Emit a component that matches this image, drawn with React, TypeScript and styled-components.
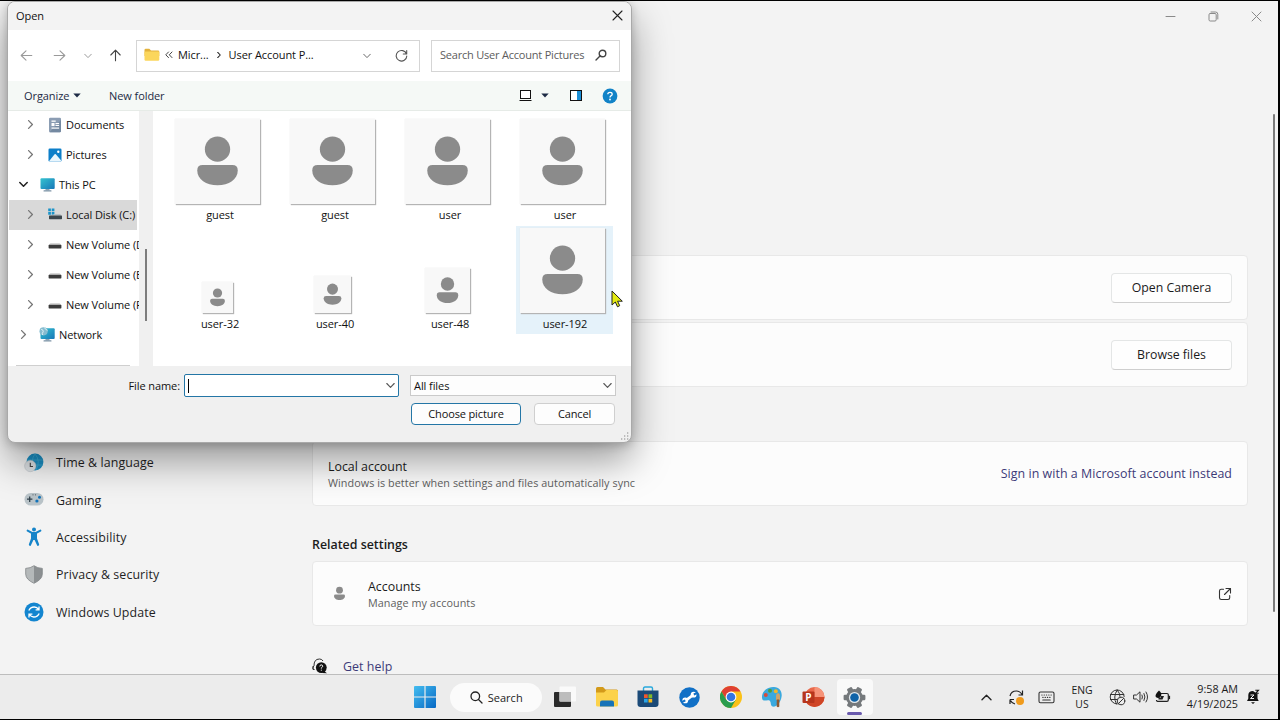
import { ReactNode } from 'react'
import styled, { createGlobalStyle, css } from 'styled-components'

const GlobalStyle = createGlobalStyle`
  * {
    box-sizing: border-box;
  }

  body {
    margin: 0;
    background: #000;
    overflow: hidden;
    font-family: 'Open Sans', 'Noto Sans', sans-serif;
    color: #1b1b1b;
    white-space: nowrap;
  }

  svg {
    display: block;
    flex: none;
  }
`

const Screen = styled.div`
  position: relative;
  width: 1280px;
  height: 720px;
  padding: 1px 2px 1px 0;
  display: flex;
  flex-direction: column;
  overflow: hidden;
  background: #000;
`

/* ---------- icons ---------- */

const Stroke = styled.svg.attrs({ fill: 'none', stroke: 'currentColor' })`
  stroke-linecap: round;
  stroke-linejoin: round;
`

const chevronPaths = {
  down: 'M0.8 2.5 L4.5 6.3 L8.2 2.5',
  right: 'M2.6 0.6 L6.4 4.5 L2.6 8.4',
  up: 'M0.8 6.4 L4.5 2.6 L8.2 6.4',
}

type ChevronProps = { dir?: keyof typeof chevronPaths; size?: number; color?: string; weight?: number }

const Chevron = ({ dir = 'down', size = 9, color = '#555', weight = 1.1 }: ChevronProps) => (
  <Stroke width={size} height={size} viewBox="0 0 9 9" color={color} strokeWidth={weight}>
    <path d={chevronPaths[dir]} />
  </Stroke>
)

const Caret = () => (
  <svg width="8" height="5" viewBox="0 0 8 5">
    <path d="M0.3 0.4 H7.7 L4 4.6 Z" fill="#1d2b45" />
  </svg>
)

const Arrow = ({ rotate = 0, color }: { rotate?: number; color: string }) => (
  <Stroke width="13" height="13" viewBox="0 0 13 13" color={color} strokeWidth="1.1">
    <path transform={`rotate(${rotate} 6.5 6.5)`} d="M1.2 6.5 H11.8 M6 1.8 L1.2 6.5 L6 11.2" />
  </Stroke>
)

const Person = ({ size }: { size: number }) => (
  <svg width={size} height={size} viewBox="0 0 86 86">
    <circle cx="43" cy="30.5" r="12.8" fill="#8b8b8b" />
    <path d="M28 46.5 H58 Q63.5 46.5 63.5 52 C63.5 61 54.5 67 43 67 C31.5 67 22.5 61 22.5 52 Q22.5 46.5 28 46.5 Z" fill="#8b8b8b" />
  </svg>
)

const FolderIcon = () => (
  <svg width="16" height="14" viewBox="0 0 16 14">
    <path d="M0.5 2 Q0.5 0.8 1.7 0.8 H5.3 L7 2.4 H14 Q15.3 2.4 15.3 3.7 V8 H0.5 Z" fill="#e3b23c" />
    <rect x="0.5" y="3.4" width="14.8" height="9.3" rx="1.2" fill="#fbd65c" />
  </svg>
)

const DocumentsIcon = () => (
  <svg width="14" height="16" viewBox="0 0 14 16">
    <rect x="1" y="0.8" width="12" height="14.4" rx="1.2" fill="#8b9db3" />
    <path d="M13 3 V14 Q13 15.2 11.8 15.2 H1.5 Z" fill="#7489a1" />
    <rect x="3.5" y="3.5" width="4.2" height="1.3" fill="#fff" />
    <rect x="3.5" y="6" width="3" height="3" fill="#fff" />
    <rect x="7.5" y="6" width="3.6" height="1.2" fill="#fff" />
    <rect x="7.5" y="8" width="3.6" height="1" fill="#fff" />
    <rect x="3.5" y="10.5" width="7.6" height="1.2" fill="#fff" />
  </svg>
)

const PicturesIcon = () => (
  <svg width="14" height="14" viewBox="0 0 14 14">
    <rect x="0.5" y="0.5" width="13" height="13" rx="1.3" fill="#0d7fc9" />
    <path d="M1 13.2 L6.6 6.2 Q7.2 5.7 7.8 6.2 L13.2 12.6 Q12.8 13.5 12 13.5 H1.8 Z" fill="#e9f6fd" />
    <circle cx="10.3" cy="3.8" r="1.2" fill="#fff" />
  </svg>
)

const MonitorIcon = ({ globe = false }: { globe?: boolean }) => (
  <svg width="17" height="15" viewBox="0 0 17 15">
    <defs>
      <linearGradient id="screen" x1="0" y1="0" x2="1" y2="1">
        <stop offset="0" stopColor="#35c3d0" />
        <stop offset="1" stopColor="#1877b8" />
      </linearGradient>
    </defs>
    <rect x="6.5" y="11.5" width="4" height="2" fill="#8aa2b4" />
    <rect x="4.5" y="13.2" width="8" height="1.2" rx="0.5" fill="#7c93a6" />
    <rect x="1.5" y="1.2" width="14.2" height="10.8" rx="1" fill="url(#screen)" />
    {globe && (
      <>
        <circle cx="4.6" cy="4.3" r="4.1" fill="#86bcd0" />
        <path d="M2.2 2.3 Q4.7 2.8 4.2 4.8 Q2.7 6.3 3.7 8 M5.5 0.6 Q6.5 2.8 8.5 3.3" stroke="#dff1f5" fill="none" />
      </>
    )}
  </svg>
)

const DiskIcon = ({ system = false }: { system?: boolean }) => (
  <svg width="16" height="14" viewBox="0 0 16 14">
    {system ? (
      <>
        <path d="M1.2 0.5 h2.7 v2.7 h-2.7 z M4.7 0.5 h2.7 v2.7 h-2.7 z M1.2 4 h2.7 v2.7 h-2.7 z M4.7 4 h2.7 v2.7 h-2.7 z" fill="#1a93c9" />
        <path d="M8 6 H13.3 L14.6 7.8 H2.4 Z" fill="#b8bfc4" />
        <rect x="2" y="7.6" width="13" height="3.6" rx="0.6" fill="#3c464d" />
      </>
    ) : (
      <>
        <path d="M3.5 5 H12.5 L14.2 7 H1.8 Z" fill="#d8d8d8" />
        <rect x="1.6" y="6.8" width="12.8" height="3.6" rx="0.6" fill="#3b3b3b" />
      </>
    )}
  </svg>
)

const ViewIcon = () => (
  <svg width="13" height="13" viewBox="0 0 13 13">
    <rect x="1.5" y="1.5" width="10" height="8" fill="#fff" stroke="#111" />
    <path d="M0.5 11.5 H12.5" stroke="#111" />
  </svg>
)

const PreviewIcon = () => (
  <svg width="14" height="12" viewBox="0 0 14 12">
    <rect x="1.5" y="0.5" width="11" height="10" fill="#fff" stroke="#111" />
    <rect x="8" y="1" width="4" height="9" fill="#1b8fd6" />
  </svg>
)

const HelpIcon = () => (
  <svg width="16" height="16" viewBox="0 0 16 16">
    <circle cx="8" cy="8" r="7.4" fill="#1183c7" />
    <path d="M5.8 6.3 Q5.8 4.4 8 4.4 Q10.2 4.4 10.2 6.2 Q10.2 7.3 8.9 7.9 Q8 8.4 8 9.5" stroke="#fff" strokeWidth="1.3" fill="none" />
    <circle cx="8" cy="11.5" r="0.9" fill="#fff" />
  </svg>
)

const TimeIcon = () => (
  <svg width="20" height="20" viewBox="0 0 20 20">
    <circle cx="11" cy="9" r="8.4" fill="#1b8fc4" />
    <path d="M3 7 H19 M4 12 H19 M11 0.8 Q6 8 10 17 M11 0.8 Q17 8 12 17" stroke="#43aed2" strokeWidth="0.7" fill="none" />
    <circle cx="6.3" cy="13" r="5.7" fill="#dde1e4" stroke="#b5bcc2" strokeWidth="0.5" />
    <path d="M6.3 9.8 V13.5 H9" stroke="#444" strokeWidth="1.1" fill="none" />
  </svg>
)

const GamingIcon = () => (
  <svg width="20" height="20" viewBox="0 0 20 20">
    <rect x="0.5" y="3" width="19" height="12.6" rx="6.3" fill="#b9c3c8" />
    <path d="M3 9.2 H8.4 M5.7 6.5 V11.9" stroke="#33424c" strokeWidth="1.3" />
    <circle cx="15.5" cy="7.2" r="1.5" fill="#1474ba" />
    <circle cx="12.9" cy="11" r="1.6" fill="#1474ba" />
    <circle cx="9" cy="4.8" r="0.6" fill="#4d5a63" />
    <circle cx="11.5" cy="4.8" r="0.6" fill="#4d5a63" />
  </svg>
)

const AccessibilityIcon = () => (
  <svg width="20" height="20" viewBox="0 0 20 20">
    <circle cx="10" cy="2.4" r="2" fill="#1584c9" />
    <path d="M3.6 3.6 L8 5.9 H12 L16.4 3.6" stroke="#1584c9" strokeWidth="2" strokeLinecap="round" fill="none" />
    <path d="M7 5.2 H13 V11.5 L15.2 17.6 Q15 19.2 13.3 18.8 L10.6 13 H9.4 L6.7 18.8 Q5 19.2 4.8 17.6 L7 11.5 Z" fill="#1584c9" />
  </svg>
)

const ShieldIcon = () => (
  <svg width="20" height="20" viewBox="0 0 20 20">
    <path d="M10 0.7 Q13.5 3.2 18.3 3.4 V9 Q18.3 14.5 10 18.3 Z" fill="#8b8f91" />
    <path d="M10 0.7 Q6.5 3.2 1.7 3.4 V9 Q1.7 14.5 10 18.3 Z" fill="#b4b8b9" />
    <path d="M10 0.7 Q13.5 3.2 18.3 3.4 V9 Q18.3 14.5 10 18.3 Q1.7 14.5 1.7 9 V3.4 Q6.5 3.2 10 0.7 Z" fill="none" stroke="#808486" strokeWidth="0.8" />
  </svg>
)

const UpdateIcon = () => (
  <svg width="20" height="20" viewBox="0 0 20 20">
    <circle cx="10" cy="10" r="9.5" fill="#1385cf" />
    <path d="M4.8 8.5 Q6.5 4.9 10.3 5 Q13 5.1 14.6 7.3 M15 4.5 V7.8 H11.6 M15.2 11.5 Q13.5 15.1 9.7 15 Q7 14.9 5.4 12.7 M5 15.5 V12.2 H8.4" stroke="#fff" strokeWidth="1.3" fill="none" />
  </svg>
)

const SupportIcon = () => (
  <svg width="16" height="16" viewBox="0 0 16 16">
    <path d="M1 11 Q0.6 8.5 2 8 Q1.8 1 7.5 1 Q10 1 11 3" stroke="#333" strokeWidth="1" fill="none" />
    <path d="M1 8 V11.5 H2.6" stroke="#333" fill="none" />
    <circle cx="9.3" cy="9.6" r="5.4" fill="#111" />
    <path d="M12 13 L15 15.3 L10 15 Z" fill="#111" />
    <path d="M7.8 8.4 Q7.9 6.9 9.3 6.9 Q10.8 7 10.7 8.3 Q10.5 9.2 9.3 9.9 V10.5 M9.3 11.7 V12.7" stroke="#fff" strokeWidth="1" fill="none" />
  </svg>
)

const OpenExternalIcon = () => (
  <Stroke width="14" height="14" viewBox="0 0 14 14" color="#333" strokeWidth="1.1">
    <path d="M5.5 2.3 H3.2 Q1.5 2.3 1.5 4 V10.8 Q1.5 12.5 3.2 12.5 H10 Q11.7 12.5 11.7 10.8 V8.5 M8 1.5 H12.5 V6 M12.5 1.5 L6.5 7.5" />
  </Stroke>
)

const StartIcon = () => (
  <svg width="22" height="22" viewBox="0 0 22 22">
    <defs>
      <linearGradient id="win" x1="0" y1="0" x2="1" y2="1">
        <stop offset="0" stopColor="#44bdf0" />
        <stop offset="1" stopColor="#0668c4" />
      </linearGradient>
    </defs>
    <path d="M0 1 Q0 0 1 0 H10.4 V10.4 H0 Z M11.6 0 H21 Q22 0 22 1 V10.4 H11.6 Z M0 11.6 H10.4 V22 H1 Q0 22 0 21 Z M11.6 11.6 H22 V21 Q22 22 21 22 H11.6 Z" fill="url(#win)" />
  </svg>
)

const TaskViewIcon = () => (
  <svg width="22" height="22" viewBox="0 0 22 22">
    <rect x="0" y="6" width="17" height="15" rx="1" fill="#2a2a2a" />
    <rect x="5.5" y="0.5" width="16.5" height="15" rx="1" fill="#fafafa" />
    <rect x="5.5" y="6" width="11.5" height="9.5" fill="#bdbdbd" />
  </svg>
)

const ExplorerIcon = () => (
  <svg width="24" height="22" viewBox="0 0 24 22">
    <path d="M1 2.5 Q1 1 2.5 1 H8 L10.5 3.5 H21.5 Q23 3.5 23 5 V9 H1 Z" fill="#d39a1a" />
    <path d="M1 6.5 H9 L11.5 4 H21.5 Q23 4 23 5.5 V19 Q23 20.5 21.5 20.5 H2.5 Q1 20.5 1 19 Z" fill="#fcd24b" />
    <path d="M5 20.5 V16.5 Q5 14.5 7 14.5 H17 Q19 14.5 19 16.5 V20.5 Z" fill="#1673b8" />
  </svg>
)

const StoreIcon = () => (
  <svg width="22" height="22" viewBox="0 0 22 22">
    <path d="M6.5 5 V2.5 Q6.5 1 8 1 H14 Q15.5 1 15.5 2.5 V5" stroke="#28a8dc" strokeWidth="1.4" fill="none" />
    <path d="M0.5 4.5 H21.5 V18 Q21.5 21 18.5 21 H3.5 Q0.5 21 0.5 18 Z" fill="#1b4a78" />
    <rect x="7" y="8.3" width="3.7" height="3.7" fill="#f0572b" />
    <rect x="11.5" y="8.3" width="3.7" height="3.7" fill="#7fba2a" />
    <rect x="7" y="12.8" width="3.7" height="3.7" fill="#2aa4e6" />
    <rect x="11.5" y="12.8" width="3.7" height="3.7" fill="#fbbb1a" />
  </svg>
)

const WrenchIcon = () => (
  <svg width="21" height="21" viewBox="0 0 21 21">
    <circle cx="10.5" cy="10.5" r="10.2" fill="#1170c6" />
    <path d="M7 13.3 L14 8" stroke="#fff" strokeWidth="2.8" />
    <circle cx="6.2" cy="13.4" r="2.9" fill="#fff" />
    <circle cx="14.6" cy="7.7" r="2.9" fill="#fff" />
    <path d="M3 15 L6.3 13.3 M18 6 L14.8 7.5" stroke="#1170c6" strokeWidth="2" />
  </svg>
)

const ChromeIcon = () => (
  <svg width="22" height="22" viewBox="0 0 22 22">
    <circle cx="11" cy="11" r="11" fill="#fbc117" />
    <path d="M11 5.5 H20.53 A11 11 0 0 0 1.47 5.5 L6.24 13.75 Z" fill="#df4033" />
    <path d="M1.47 5.5 A11 11 0 0 0 11 22 L15.76 13.75 L11 16.5 L6.24 13.75 Z" fill="#2a9d4e" />
    <circle cx="11" cy="11" r="5.4" fill="#fff" />
    <circle cx="11" cy="11" r="4.3" fill="#3475e0" />
  </svg>
)

const PaintIcon = () => (
  <svg width="22" height="22" viewBox="0 0 22 22">
    <path d="M1 12 C0.5 5 7 0.5 13 1 C19 1.5 21.5 6 20.5 11 C19.5 17 15 21.5 11.5 20.5 C9 19.5 10.5 16 8.5 14.5 C6 13 2 17 1 12 Z" fill="#3aa9de" />
    <circle cx="4.8" cy="9" r="2" fill="#d54c3c" />
    <circle cx="9" cy="4.8" r="2" fill="#4f9d3d" />
    <circle cx="14.8" cy="5.2" r="2" fill="#f0b62a" />
    <path d="M15 9.5 Q15 7.5 17 7 Q19 7.5 19 9.5 V14 H15 Z" fill="#cfa36a" />
    <path d="M15.7 13.5 H18.3 V20.5 Q17 22 15.7 20.5 Z" fill="#8e5a32" />
  </svg>
)

const PptLetter = styled.text`
  font: 700 10px 'Open Sans', sans-serif;
  fill: #fff;
`

const PowerPointIcon = () => (
  <svg width="23" height="22" viewBox="0 0 23 22">
    <circle cx="12.5" cy="11" r="10" fill="#e9684a" />
    <path d="M12.5 1 A10 10 0 0 1 22.5 11 H12.5 Z" fill="#f69378" />
    <path d="M2.5 11 A10 10 0 0 0 22.5 11 Z" fill="#cf4526" />
    <rect x="0.5" y="5.5" width="12" height="11.5" rx="1" fill="#b7351c" />
    <PptLetter x="3.3" y="14.8">P</PptLetter>
  </svg>
)

const GearIcon = () => (
  <svg width="23" height="23" viewBox="0 0 23 23">
    <g fill="#75797c">
      {[30, 90, 150].map(a => (
        <rect key={a} x="8.7" y="0.6" width="5.6" height="21.8" rx="1.2" transform={`rotate(${a} 11.5 11.5)`} />
      ))}
      <circle cx="11.5" cy="11.5" r="8.4" />
    </g>
    <circle cx="11.5" cy="11.5" r="5.6" fill="#e4eaee" />
    <circle cx="11.5" cy="11.5" r="4.3" fill="#0f63a8" />
  </svg>
)

const SyncIcon = () => (
  <svg width="17" height="17" viewBox="0 0 17 17">
    <path d="M2 7 Q3.2 2 8.3 2 Q12 2 14 5.5 M14.5 1.5 V6 H10.5 M2 10.5 H6 M2 10.5 V15 M2.5 11.5 Q4 14.5 7 15" stroke="#222" strokeWidth="1.2" fill="none" />
    <circle cx="12" cy="12" r="4" fill="#f09b1c" />
  </svg>
)

const KeyboardIcon = () => (
  <Stroke width="17" height="13" viewBox="0 0 17 13" color="#333" strokeWidth="1.1">
    <rect x="1" y="1" width="15" height="10.8" rx="1.5" />
    <path d="M3.8 4 h.3 M6.1 4 h.3 M8.4 4 h.3 M10.7 4 h.3 M13 4 h.3 M4.8 6.4 h.3 M7.1 6.4 h.3 M9.4 6.4 h.3 M11.7 6.4 h.3 M4.8 9 H12.2" />
  </Stroke>
)

const NoNetworkIcon = () => (
  <Stroke width="17" height="17" viewBox="0 0 17 17" color="#333" strokeWidth="1">
    <path d="M8 15 A7 7 0 1 1 15.2 7.5 M1.5 5.5 H14.8 M1.5 10.5 H8 M8.2 1 Q3.5 8 7.5 15 M8.2 1 Q11 4 11 7.5" />
    <circle cx="12" cy="12" r="3.8" />
    <path d="M9.5 14.5 L14.5 9.5" />
  </Stroke>
)

const VolumeIcon = () => (
  <Stroke width="16" height="14" viewBox="0 0 16 14" color="#333" strokeWidth="1">
    <path d="M1 5 H3.5 L7 1.8 V12.2 L3.5 9 H1 Z M9 5 Q10 7 9 9 M11 3.5 Q13 7 11 10.5 M13 2 Q16.2 7 13 12" />
  </Stroke>
)

const BatteryIcon = () => (
  <svg width="17" height="14" viewBox="0 0 17 14">
    <path d="M5 3.5 H13 Q14.3 3.5 14.3 4.8 V10 Q14.3 11.3 13 11.3 H3.5 Q2.5 11.3 2.5 10" stroke="#222" strokeWidth="1.2" fill="none" />
    <rect x="14.6" y="5.8" width="1.5" height="3.3" fill="#222" />
    <path d="M7 6 H10 L8.5 9.5 H4.5 V7.5 H7 Z" fill="#222" />
    <path d="M5 0.5 Q8.5 3.5 6.8 6.5 Q4.5 9.3 1.8 7 Q0.5 4.5 5 0.5 Z" fill="#111" />
  </svg>
)

const BellIcon = () => (
  <svg width="14" height="16" viewBox="0 0 14 16">
    <path d="M1 12 L2.3 9.5 V6 Q2.5 2 7 2 L11.5 5 V9.5 L12.7 12 Z" fill="#111" />
    <path d="M5 13.3 H9 L7 15 Z" fill="#111" />
    <path d="M4.5 6 H8 L4.5 9.5 H8" stroke="#eee" fill="none" />
    <path d="M9.3 1.2 H12.5 L9.7 4.3 H12.8" stroke="#111" strokeWidth="1.1" fill="none" />
  </svg>
)

/* ---------- settings window ---------- */

const SettingsWindow = styled.div`
  height: 673px;
  display: flex;
  background: #f3f3f3;
  overflow: hidden;
`

const Sidebar = styled.nav`
  width: 312px;
  padding: 443px 0 0 24px;
`

const SidebarItem = styled.div`
  height: 37.4px;
  display: flex;
  align-items: center;
  gap: 12px;
  font-size: 12.4px;
  letter-spacing: 0.1px;
  color: #1f1f1f;
`

const SettingsMain = styled.main`
  width: 936px;
  display: flex;
  flex-direction: column;

  > * {
    flex: none;
  }
`

const CaptionBar = styled.div`
  align-self: flex-end;
  height: 30px;
  display: flex;
  align-items: center;
  gap: 32px;
  margin-right: -14px;
  color: #8a8a8a;
`

const Card = styled.section<{ $gap: number }>`
  height: 65px;
  margin-top: ${({ $gap }) => $gap}px;
  padding: 0 15px;
  display: flex;
  align-items: center;
  justify-content: space-between;
  background: #fcfcfc;
  border: 1px solid #e8e8e8;
  border-radius: 4px;
`

const CardButton = styled.button`
  width: 121px;
  height: 30px;
  margin-left: auto;
  padding: 0;
  border: 1px solid #e4e6e6;
  border-bottom-color: #cfcfcf;
  border-radius: 4px;
  background: #fefefe;
  font: inherit;
  font-size: 12.3px;
  color: #1b1b1b;
`

const CardText = styled.div<{ $indent?: number }>`
  display: flex;
  flex-direction: column;
  flex: 1;
  margin-left: ${({ $indent = 0 }) => $indent}px;
  padding-top: 2px;

  > strong {
    font-size: 12.4px;
    font-weight: 400;
    line-height: 17px;
  }

  > span {
    font-size: 10.8px;
    line-height: 16px;
    letter-spacing: 0.06px;
    color: #5f5f5f;
  }
`

const SettingsLink = styled.a`
  font-size: 12.4px;
  letter-spacing: 0.06px;
  color: #3c3a78;
`

const SectionTitle = styled.h2`
  margin: 29px 0 0;
  height: 20px;
  line-height: 20px;
  font-size: 12.4px;
  font-weight: 600;
`

const HelpRow = styled.div`
  display: flex;
  align-items: center;
  gap: 15px;
  height: 20px;
  margin-top: 30px;
`

const PageScroll = styled.div`
  width: 2px;
  height: 498px;
  margin: 113px 0 0 25px;
  border-radius: 1px;
  background: #7b7b7b;
`

/* ---------- file dialog ---------- */

const Dialog = styled.div`
  position: absolute;
  left: 7px;
  top: 1px;
  width: 625px;
  height: 442px;
  display: flex;
  flex-direction: column;
  border: 1px solid #a9a9a9;
  border-radius: 8px;
  background: #f0f0f0;
  box-shadow: 0 2px 10px rgba(0, 0, 0, 0.2), 0 18px 38px rgba(0, 0, 0, 0.38);
  font-size: 11px;
  letter-spacing: -0.08px;
  color: #111;
`

const DialogTitle = styled.div`
  height: 28px;
  flex: none;
  padding: 0 8px 2px;
  display: flex;
  align-items: center;
  justify-content: space-between;
  border-radius: 7px 7px 0 0;
  background: #f3f3f3;
`

const AddressBar = styled.div`
  height: 51px;
  flex: none;
  padding: 0 11px 0 12px;
  display: flex;
  align-items: center;
  background: #fff;
`

const NavButtons = styled.div`
  width: 116px;
  display: flex;
  align-items: center;
  gap: 20px;

  > :nth-child(3) {
    margin-left: -2px;
  }

  > :nth-child(4) {
    margin-left: -3px;
  }
`

const Field = styled.div<{ $width: number }>`
  width: ${({ $width }) => $width}px;
  height: 32px;
  flex: none;
  display: flex;
  align-items: center;
  border: 1px solid #d5d5d5;
  background: #fff;
`

const Crumbs = styled(Field)`
  padding: 0 11px 2px 7px;
  gap: 5px;
  margin-right: 11px;

  > .separator {
    margin: 0 2px;
  }

  > .history {
    margin: 2px 0 0 auto;
  }

  > .refresh {
    margin: 2px 0 0 19px;
  }
`

const SearchField = styled(Field)`
  padding: 0 12px 2px 8px;
  justify-content: space-between;
  letter-spacing: -0.21px;
  color: #5c5c5c;
`

const CommandBar = styled.div`
  height: 30px;
  flex: none;
  padding: 0 13px 0 16px;
  display: flex;
  align-items: center;
  background: #f5f9f6;
  border-bottom: 1px solid #e6ebe7;
  color: #1d2b45;
`

const Organize = styled.div`
  width: 85px;
  display: flex;
  align-items: center;
  gap: 4px;
`

const CommandIcons = styled.div`
  margin-left: auto;
  display: flex;
  align-items: center;

  > :nth-child(2) {
    margin: 0 20px 0 9px;
  }

  > :nth-child(4) {
    margin-left: 19px;
  }
`

const DialogBody = styled.div`
  height: 255px;
  flex: none;
  display: flex;
`

const Tree = styled.div`
  width: 131px;
  overflow: hidden;
  background: #fff;
`

const TreeRow = styled.div<{ $level: number; $selected?: boolean }>`
  height: 30px;
  margin: 0 2px 0 1px;
  padding: 0 0 1px ${({ $level }) => ($level ? 17 : 10)}px;
  display: flex;
  align-items: center;
  ${({ $selected }) => $selected && css`background: #d9d9d9;`}

  &:first-child {
    height: 29px;
    padding-bottom: 2px;
  }
`

const TreeIcon = styled.span`
  width: 17px;
  margin: 0 3px 0 11px;
  flex: none;
  display: flex;
  justify-content: center;
`

const TreeDivider = styled.div`
  height: 1px;
  margin: 15px 9px 0 8px;
  background: #cfcfcf;
`

const TreeScroll = styled.div`
  width: 14px;
  padding: 138px 0 0 6px;
  background: #f0f0f0;

  > div {
    width: 2px;
    height: 72px;
    background: #7d7d7d;
  }
`

const FileGrid = styled.div`
  flex: 1;
  padding: 6px 0 0 18px;
  display: grid;
  grid-template-columns: repeat(4, 97px);
  grid-template-rows: 108px 108px;
  gap: 1px 18px;
  background: #fff;
`

const FileItem = styled.div<{ $hover?: boolean }>`
  display: flex;
  flex-direction: column;
  align-items: center;
  ${({ $hover }) => $hover && css`background: #e5f2fa;`}
`

const Thumb = styled.div`
  height: 88px;
  padding: 0 4px 1px 0;
  display: flex;
  align-items: flex-end;

  > div {
    background: #f8f8f8;
    box-shadow: 1px 1px 1px #b4b4b4, 0 0 1px #e2e2e2;
  }
`

const FileName = styled.div`
  height: 19px;
  line-height: 19px;
  padding-left: 1px;
`

const DialogFooter = styled.div`
  flex: 1;
  padding: 8px 15px 0 0;
  display: flex;
  flex-direction: column;
  gap: 6px;
`

const FooterRow = styled.div`
  height: 23px;
  display: flex;
  justify-content: flex-end;
  align-items: center;
`

const ButtonRow = styled(FooterRow)`
  height: 22px;
  padding-right: 1px;
  gap: 13px;
`

const NameInput = styled.div`
  width: 215px;
  height: 23px;
  margin: 0 11px 0 4px;
  padding: 0 3px;
  flex: none;
  display: flex;
  align-items: center;
  justify-content: space-between;
  border: 1px solid #2476a6;
  border-radius: 2px;
  background: #fff;
`

const TextCaret = styled.i`
  width: 1px;
  height: 14px;
  background: #000;
`

const FilterSelect = styled.div`
  width: 206px;
  height: 21px;
  padding: 0 3px;
  flex: none;
  display: flex;
  align-items: center;
  justify-content: space-between;
  border: 1px solid #cacaca;
  background: #fdfdfd;
`

const DialogButton = styled.button<{ $width: number; $primary?: boolean }>`
  width: ${({ $width }) => $width}px;
  height: 22px;
  padding: 0 0 1px;
  flex: none;
  border: 1px solid ${({ $primary }) => ($primary ? '#2476a6' : '#cfcfcf')};
  border-radius: 4px;
  background: #fdfdfd;
  font: inherit;
  letter-spacing: -0.14px;
  color: #111;
`

const Grip = styled.svg`
  position: absolute;
  right: 2px;
  bottom: 1px;
`

const Pointer = styled.svg`
  position: absolute;
  left: 611px;
  top: 290px;
`

/* ---------- taskbar ---------- */

const Taskbar = styled.footer`
  height: 45px;
  display: flex;
  align-items: center;
  border-top: 1px solid #bdbdbd;
  background: #ececec;
`

const TaskApps = styled.div`
  margin-left: 407px;
  display: flex;
  align-items: center;
`

const TaskSlot = styled.div<{ $active?: boolean }>`
  position: relative;
  width: 36px;
  height: 36px;
  margin-right: 5.3px;
  display: flex;
  align-items: center;
  justify-content: center;
  border-radius: 4px;
  ${({ $active }) => $active && css`
    background: #f9f9f9;

    &::after {
      content: '';
      position: absolute;
      bottom: 0;
      width: 15px;
      height: 3px;
      border-radius: 2px;
      background: #6a5aad;
    }
  `}
`

const TaskSearch = styled.div`
  width: 92px;
  height: 29px;
  margin: 0 5.7px 0 1.5px;
  padding-left: 20px;
  display: flex;
  align-items: center;
  gap: 5px;
  border-radius: 15px;
  background: #fbfbfb;
  font-size: 11px;
`

const Tray = styled.div`
  margin-left: auto;
  padding-right: 18px;
  display: flex;
  align-items: center;
  font-size: 10.4px;
  line-height: 14.5px;
`

const TrayGap = styled.span<{ $width: number }>`
  width: ${({ $width }) => $width}px;
`

const Language = styled.div`
  width: 54px;
  text-align: center;
`

const Clock = styled.div`
  width: 67px;
  padding-bottom: 1px;
  text-align: right;
  font-size: 10.8px;
`

/* ---------- data ---------- */

const sidebarItems: [string, ReactNode][] = [
  ['Time & language', <TimeIcon />],
  ['Gaming', <GamingIcon />],
  ['Accessibility', <AccessibilityIcon />],
  ['Privacy & security', <ShieldIcon />],
  ['Windows Update', <UpdateIcon />],
]

const treeItems: { label: string; icon: ReactNode; level: number; open?: boolean; selected?: boolean }[] = [
  { label: 'Documents', icon: <DocumentsIcon />, level: 1 },
  { label: 'Pictures', icon: <PicturesIcon />, level: 1 },
  { label: 'This PC', icon: <MonitorIcon />, level: 0, open: true },
  { label: 'Local Disk (C:)', icon: <DiskIcon system />, level: 1, selected: true },
  { label: 'New Volume (D:)', icon: <DiskIcon />, level: 1 },
  { label: 'New Volume (E:)', icon: <DiskIcon />, level: 1 },
  { label: 'New Volume (F:)', icon: <DiskIcon />, level: 1 },
  { label: 'Network', icon: <MonitorIcon globe />, level: 0 },
]

const files = [
  { name: 'guest', size: 85 },
  { name: 'guest', size: 85 },
  { name: 'user', size: 85 },
  { name: 'user', size: 85 },
  { name: 'user-32', size: 31 },
  { name: 'user-40', size: 37 },
  { name: 'user-48', size: 45 },
  { name: 'user-192', size: 85, hover: true },
]

const OpenDialog = () => (
  <Dialog>
    <DialogTitle>
      Open
      <Stroke width="11" height="11" viewBox="0 0 11 11" color="#222" strokeWidth="1.1">
        <path d="M1 1 L10 10 M10 1 L1 10" />
      </Stroke>
    </DialogTitle>
    <AddressBar>
      <NavButtons>
        <Arrow color="#9a9a9a" />
        <Arrow rotate={180} color="#9a9a9a" />
        <Chevron color="#9a9a9a" size={8} />
        <Arrow rotate={90} color="#444" />
      </NavButtons>
      <Crumbs $width={284}>
        <FolderIcon />
        <Stroke width="8" height="8" viewBox="0 0 8 8" color="#444" strokeWidth="1">
          <path d="M3.5 1 L0.8 3.8 L3.5 6.6 M7 1 L4.3 3.8 L7 6.6" />
        </Stroke>
        <span>Micr...</span>
        <span className="separator"><Chevron dir="right" color="#222" size={6} weight={1.6} /></span>
        <span>User Account P...</span>
        <span className="history"><Chevron color="#666" size={8} /></span>
        <Stroke className="refresh" width="13" height="13" viewBox="0 0 13 13" color="#555" strokeWidth="1.1">
          <path d="M11.5 5 A5.3 5.3 0 1 0 11.8 7 M11.7 1.5 V5 H8.3" />
        </Stroke>
      </Crumbs>
      <SearchField $width={189}>
        Search User Account Pictures
        <Stroke width="12" height="12" viewBox="0 0 12 12" color="#444" strokeWidth="1.4">
          <circle cx="7.5" cy="4.5" r="3.3" />
          <path d="M5 7 L1 11" />
        </Stroke>
      </SearchField>
    </AddressBar>
    <CommandBar>
      <Organize>Organize <Caret /></Organize>
      New folder
      <CommandIcons>
        <ViewIcon />
        <Caret />
        <PreviewIcon />
        <HelpIcon />
      </CommandIcons>
    </CommandBar>
    <DialogBody>
      <Tree>
        {treeItems.map(({ label, icon, level, open, selected }) => (
          <TreeRow key={label} $level={level} $selected={selected}>
            <Chevron dir={open ? 'down' : 'right'} color={open ? '#222' : '#777'} weight={open ? 1.5 : 1.3} />
            <TreeIcon>{icon}</TreeIcon>
            {label}
          </TreeRow>
        ))}
        <TreeDivider />
      </Tree>
      <TreeScroll><div /></TreeScroll>
      <FileGrid>
        {files.map(({ name, size, hover }, i) => (
          <FileItem key={i} $hover={hover}>
            <Thumb>
              <div><Person size={size} /></div>
            </Thumb>
            <FileName>{name}</FileName>
          </FileItem>
        ))}
      </FileGrid>
    </DialogBody>
    <DialogFooter>
      <FooterRow>
        <span>File name:</span>
        <NameInput>
          <TextCaret />
          <Chevron />
        </NameInput>
        <FilterSelect>
          All files
          <Chevron />
        </FilterSelect>
      </FooterRow>
      <ButtonRow>
        <DialogButton $width={110} $primary>Choose picture</DialogButton>
        <DialogButton $width={81}>Cancel</DialogButton>
      </ButtonRow>
    </DialogFooter>
    <Grip width="9" height="9" viewBox="0 0 9 9">
      <path d="M7 1 h1.3 M7 4 h1.3 M7 7 h1.3 M4 4 h1.3 M4 7 h1.3 M1 7 h1.3" stroke="#aaa" strokeWidth="1.3" />
    </Grip>
  </Dialog>
)

export default function App() {
  return (
    <Screen>
      <GlobalStyle />
      <SettingsWindow>
        <Sidebar>
          {sidebarItems.map(([label, icon]) => (
            <SidebarItem key={label}>{icon}{label}</SidebarItem>
          ))}
        </Sidebar>
        <SettingsMain>
          <CaptionBar>
            <Stroke width="11" height="11" viewBox="0 0 11 11" strokeWidth="1"><path d="M1 5.5 H10" /></Stroke>
            <Stroke width="11" height="11" viewBox="0 0 11 11" strokeWidth="1">
              <rect x="1" y="2.5" width="7.2" height="7.5" rx="1.2" />
              <path d="M3 1 H7.5 Q9.8 1 9.8 3.2 V8" />
            </Stroke>
            <Stroke width="11" height="11" viewBox="0 0 11 11" strokeWidth="1"><path d="M1 1 L10 10 M10 1 L1 10" /></Stroke>
          </CaptionBar>
          <Card $gap={224}><CardButton>Open Camera</CardButton></Card>
          <Card $gap={2}><CardButton>Browse files</CardButton></Card>
          <Card $gap={54}>
            <CardText>
              <strong>Local account</strong>
              <span>Windows is better when settings and files automatically sync</span>
            </CardText>
            <SettingsLink>Sign in with a Microsoft account instead</SettingsLink>
          </Card>
          <SectionTitle>Related settings</SectionTitle>
          <Card $gap={6}>
            <Person size={23} />
            <CardText $indent={17}>
              <strong>Accounts</strong>
              <span>Manage my accounts</span>
            </CardText>
            <OpenExternalIcon />
          </Card>
          <HelpRow>
            <SupportIcon />
            <SettingsLink>Get help</SettingsLink>
          </HelpRow>
        </SettingsMain>
        <PageScroll />
      </SettingsWindow>
      <Taskbar>
        <TaskApps>
          <TaskSlot><StartIcon /></TaskSlot>
          <TaskSearch>
            <Stroke width="13" height="13" viewBox="0 0 13 13" color="#222" strokeWidth="1.3">
              <circle cx="5.3" cy="5.3" r="4.3" />
              <path d="M8.5 8.5 L12 12" />
            </Stroke>
            Search
          </TaskSearch>
          <TaskSlot><TaskViewIcon /></TaskSlot>
          <TaskSlot><ExplorerIcon /></TaskSlot>
          <TaskSlot><StoreIcon /></TaskSlot>
          <TaskSlot><WrenchIcon /></TaskSlot>
          <TaskSlot><ChromeIcon /></TaskSlot>
          <TaskSlot><PaintIcon /></TaskSlot>
          <TaskSlot><PowerPointIcon /></TaskSlot>
          <TaskSlot $active><GearIcon /></TaskSlot>
        </TaskApps>
        <Tray>
          <Chevron dir="up" size={11} color="#222" />
          <TrayGap $width={16} />
          <SyncIcon />
          <TrayGap $width={13} />
          <KeyboardIcon />
          <Language>ENG<br />US</Language>
          <NoNetworkIcon />
          <TrayGap $width={7} />
          <VolumeIcon />
          <TrayGap $width={5} />
          <BatteryIcon />
          <Clock>9:58 AM<br />4/19/2025</Clock>
          <TrayGap $width={8} />
          <BellIcon />
        </Tray>
      </Taskbar>
      <OpenDialog />
      <Pointer width="13" height="18" viewBox="0 0 13 18">
        <path d="M1 1 V15 L4.3 12 L6.5 16.8 L8.7 15.7 L6.6 11.2 H11.3 Z" fill="#e3ea12" stroke="#222" strokeWidth="1" />
      </Pointer>
    </Screen>
  )
}
